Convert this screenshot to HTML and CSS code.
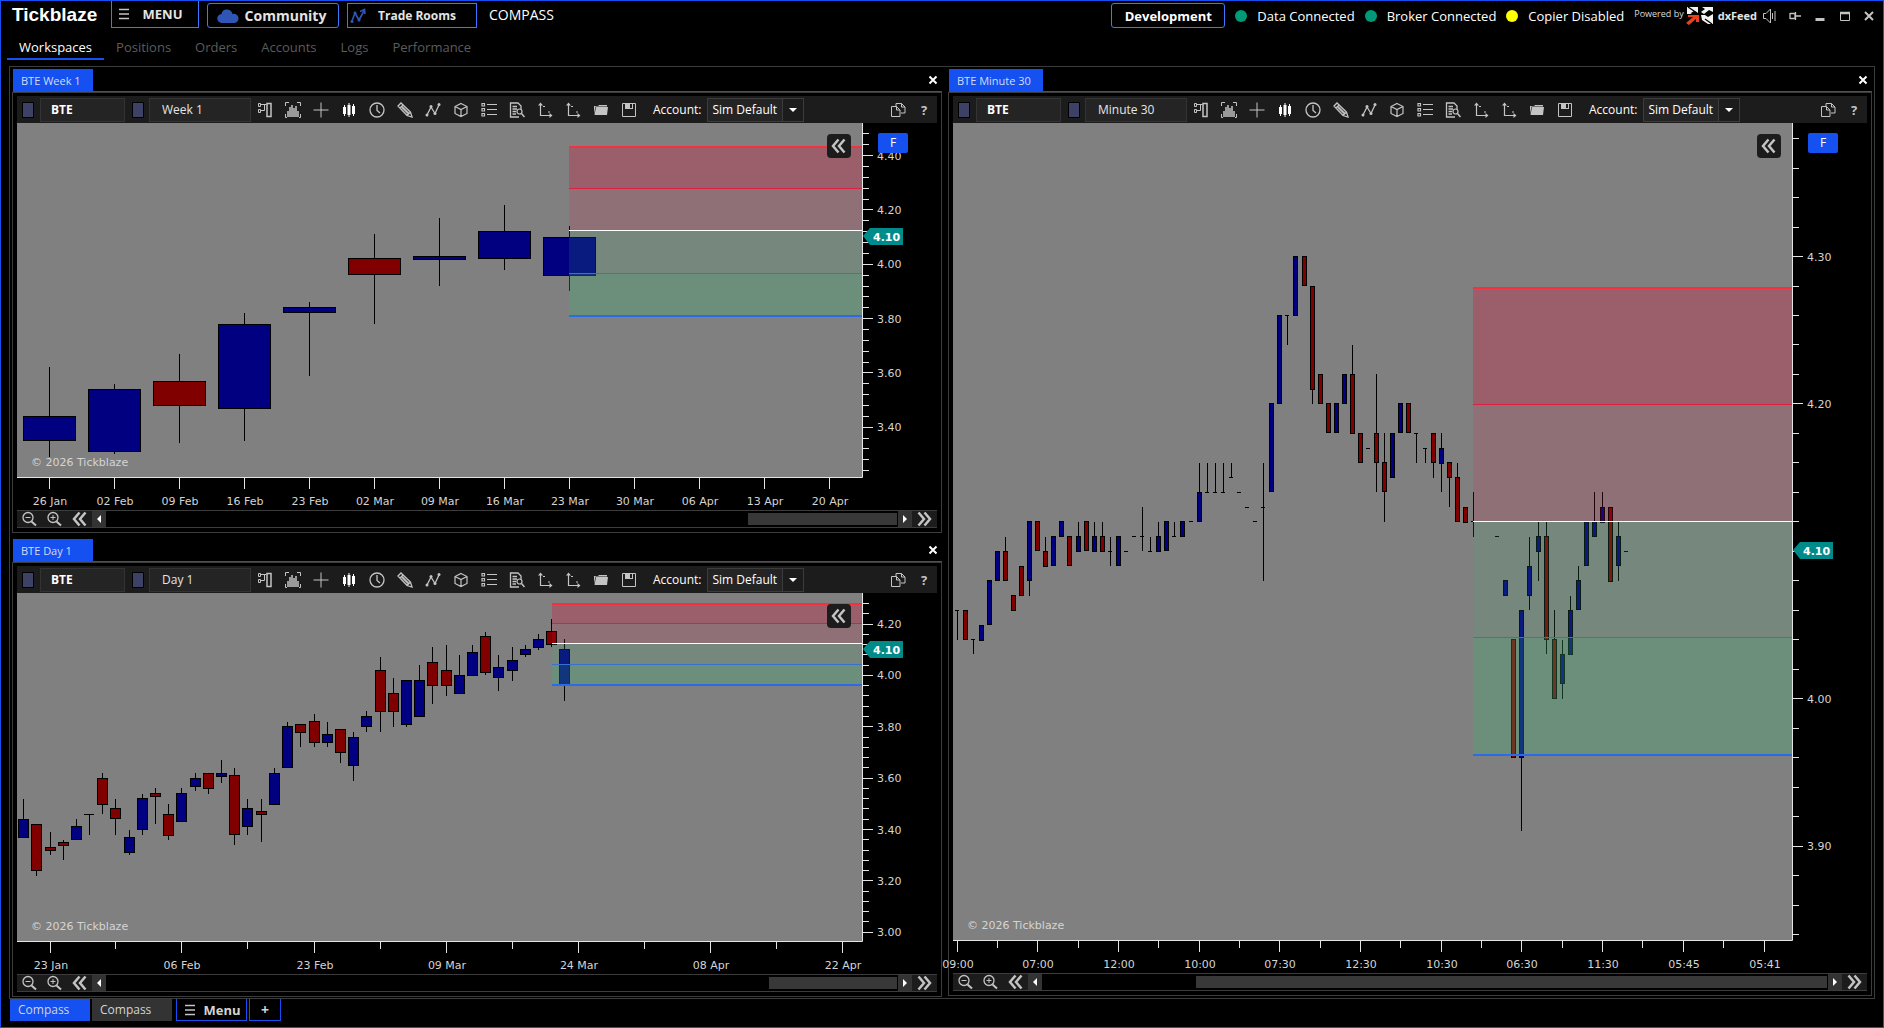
FILE: index.html
```html
<!DOCTYPE html>
<html lang="en">
<head>
<meta charset="utf-8">
<meta name="viewport" content="width=device-width, initial-scale=1">
<title>Tickblaze</title>
<link rel="stylesheet" href="styles.css">
</head>
<body>
<svg class="sprite" aria-hidden="true">
  <symbol id="i-dock" viewBox="0 0 16 16"><path d="M1.500 1.500h2v3h-2zM1.500 7.500h2v3h-2zM4 2.500h5.500M4 8.500h3.500M7.500 3v5.500" fill="none" stroke="currentColor"/><path d="M10 1.500h4v13h-4z" fill="none" stroke="currentColor" stroke-width="1.500"/></symbol>
  <symbol id="i-histogram" viewBox="0 0 16 16"><path d="M.5 4V.5H4M12 .5h3.500V4M.5 12v3.500H2M15.500 12v3.500H14" fill="none" stroke="currentColor"/><path d="M3 15V9M5 15V5M7 15V3M9 15V6M11 15V4M13 15V9" stroke="currentColor" stroke-width="1.500"/></symbol>
  <symbol id="i-cross" viewBox="0 0 16 16"><path d="M8 .5v15M.5 8h15" stroke="currentColor"/></symbol>
  <symbol id="i-candles" viewBox="0 0 16 16"><path d="M2 5h3v7H2zM6.500 3h3v10h-3zM11 4h3v8h-3z" fill="currentColor"/><path d="M3.500 3v11M8 1v14M12.500 2v12" stroke="currentColor"/></symbol>
  <symbol id="i-clock" viewBox="0 0 16 16"><circle cx="8" cy="8" r="7" fill="none" stroke="currentColor" stroke-width="1.300"/><path d="M8 3v5.500l3 2.500" fill="none" stroke="currentColor" stroke-width="1.300"/></symbol>
  <symbol id="i-pencil" viewBox="0 0 16 16"><path d="M1 4 4 1 13.500 10 15 15 10 13.500zM3 6 6 3M5 5l7 7M10 13.500 13.500 10" fill="none" stroke="currentColor" stroke-width="1.300"/><path d="M4 6 6 4 12.500 10.500 10.500 12.500z" fill="currentColor" opacity=".6"/></symbol>
  <symbol id="i-zigzag" viewBox="0 0 16 16"><path d="M2 13 6 5l4 6.500L14 3" fill="none" stroke="currentColor" stroke-width="1.300"/><circle cx="2" cy="13" r="1.500" fill="currentColor"/><circle cx="6" cy="4.500" r="1.500" fill="currentColor"/><circle cx="10" cy="11.500" r="1.500" fill="currentColor"/><circle cx="14" cy="2.500" r="1.500" fill="currentColor"/></symbol>
  <symbol id="i-cube" viewBox="0 0 16 16"><path d="M8 1.500 14 4.500v7L8 14.500 2 11.500v-7zM2 4.500l6 3 6-3M8 7.500v7" fill="none" stroke="currentColor" stroke-width="1.200"/></symbol>
  <symbol id="i-list" viewBox="0 0 16 16"><path d="M1 1.500h2.500V4H1zM1 6.500h2.500V9H1zM1 11.500h2.500V14H1zM6 2.500h10M6 7.500h10M6 12.500h10" fill="none" stroke="currentColor" stroke-width="1.200"/></symbol>
  <symbol id="i-report" viewBox="0 0 16 16"><path d="M12 7V4L9 1H1.500v14H10M3.500 4.500H8M3.500 7H8M3.500 9.500H7M3.500 12H7" fill="none" stroke="currentColor" stroke-width="1.300"/><circle cx="10.500" cy="9.500" r="2.500" fill="none" stroke="currentColor" stroke-width="1.200"/><path d="m12.500 11.500 3 3.500" stroke="currentColor" stroke-width="1.500"/></symbol>
  <symbol id="i-axis" viewBox="0 0 16 16"><path d="M3.500 2v11.500H14" fill="none" stroke="currentColor" stroke-width="1.200"/><path d="M1 3.500 3.500.5 6 3.500zM12.500 11l3 2.500-3 2.500z" fill="currentColor"/><path d="M6 4.500h2M12 9v2" stroke="currentColor"/></symbol>
  <symbol id="i-folder" viewBox="0 0 16 16"><path d="M1.500 13 3 5h12l-1 8zM1 12V4h4l1-1h8v1.500H2.500z" fill="currentColor"/></symbol>
  <symbol id="i-save" viewBox="0 0 16 16"><path d="M1.500 1.500h13v13h-13z" fill="none" stroke="currentColor"/><path d="M4 1h8v6H4z" fill="currentColor"/><path d="M9 2h2v4H9z" fill="#1c1c1c"/></symbol>
  <symbol id="i-copy" viewBox="0 0 16 16"><path d="M6 4.500V1.500h5.500L15 5v6h-4" fill="none" stroke="currentColor"/><path d="M1.500 4.500h5L10 8v6.500H1.500zM6.500 4.500V8H10M11.500 1.500V5H15" fill="none" stroke="currentColor"/></symbol>
  <symbol id="i-zoom-out" viewBox="0 0 16 16"><circle cx="6" cy="6.500" r="5" fill="none" stroke="currentColor" stroke-width="1.300"/><path d="M3.500 6.500h5" stroke="currentColor"/><path d="m9.500 10.500 4.500 4" stroke="currentColor" stroke-width="2"/></symbol>
  <symbol id="i-zoom-in" viewBox="0 0 16 16"><circle cx="6" cy="6.500" r="5" fill="none" stroke="currentColor" stroke-width="1.300"/><path d="M3.500 6.500h5M6 4v5" stroke="currentColor"/><path d="m9.500 10.500 4.500 4" stroke="currentColor" stroke-width="2"/></symbol>
  <symbol id="i-back" viewBox="0 0 16 16"><path d="M7.500 1.500 2 8l5.500 6.500M13.500 1.500 8 8l5.500 6.500" fill="none" stroke="currentColor" stroke-width="2.500"/></symbol>
  <symbol id="i-forward" viewBox="0 0 16 16"><path d="M1.500 1.500 7 8l-5.500 6.500M7.500 1.500 13 8l-5.500 6.500" fill="none" stroke="currentColor" stroke-width="2.500"/></symbol>
  <symbol id="i-left" viewBox="0 0 16 16"><path d="M10 4v8L6 8z" fill="currentColor"/></symbol>
  <symbol id="i-right" viewBox="0 0 16 16"><path d="M6 4v8l4-4z" fill="currentColor"/></symbol>
  <symbol id="i-burger" viewBox="0 0 16 16"><path d="M3 3.500h10M3 8h10M3 12.500h10" stroke="currentColor" stroke-width="1.600"/></symbol>
  <symbol id="i-close" viewBox="0 0 16 16"><path d="m4.500 4.500 7 7M11.500 4.500l-7 7" stroke="currentColor" stroke-width="2"/></symbol>
</svg>

<template id="tool-buttons">
  <button type="button" aria-label="Dock"><svg><use href="#i-dock"/></svg></button>
  <button type="button" aria-label="Bar type"><svg><use href="#i-histogram"/></svg></button>
  <button type="button" aria-label="Crosshair"><svg><use href="#i-cross"/></svg></button>
  <button type="button" aria-label="Chart style"><svg class="bright"><use href="#i-candles"/></svg></button>
  <button type="button" aria-label="Sessions"><svg><use href="#i-clock"/></svg></button>
  <button type="button" aria-label="Drawing tools"><svg><use href="#i-pencil"/></svg></button>
  <button type="button" aria-label="Indicators"><svg><use href="#i-zigzag"/></svg></button>
  <button type="button" aria-label="Objects"><svg><use href="#i-cube"/></svg></button>
  <button type="button" aria-label="Properties"><svg><use href="#i-list"/></svg></button>
  <button type="button" aria-label="Data window"><svg><use href="#i-report"/></svg></button>
  <button type="button" aria-label="Scale price axis"><svg><use href="#i-axis"/></svg></button>
  <button type="button" aria-label="Scale time axis"><svg><use href="#i-axis"/></svg></button>
  <button type="button" aria-label="Open template"><svg><use href="#i-folder"/></svg></button>
  <button type="button" aria-label="Save template"><svg><use href="#i-save"/></svg></button>
</template>

<header class="topbar">
  <span class="brand">Tickblaze</span>
  <button type="button" class="top-button menu-button"><svg><use href="#i-burger"/></svg>MENU</button>
  <button type="button" class="top-button community-button">
    <svg viewBox="0 0 22 14"><path d="M5 14a4.500 4.500 0 0 1-.5-9A5 5 0 0 1 10 .5 6 6 0 0 1 15.500 5 4.500 4.500 0 0 1 21.500 9.500 4.500 4.500 0 0 1 17 14z" fill="#2f55b5"/></svg>Community</button>
  <button type="button" class="top-button rooms-button">
    <svg viewBox="0 0 16 16"><path d="M2 13 5 5l4 7 5-9M10 3.500 14.500 1.500 15 6" fill="none" stroke="#2f55b5" stroke-width="1.600"/><circle cx="2" cy="13.500" r="1.500" fill="#2f55b5"/><circle cx="5" cy="5" r="1.500" fill="#2f55b5"/><circle cx="9" cy="12" r="1.500" fill="#2f55b5"/></svg>Trade Rooms</button>
  <span class="workspace-name">COMPASS</span>
  <div class="status">
    <button type="button" class="top-button dev-button">Development</button>
    <span class="state">Data Connected</span>
    <span class="state">Broker Connected</span>
    <span class="state state-off">Copier Disabled</span>
    <span class="powered">Powered by</span>
    <svg class="feed-logo" viewBox="0 0 28 18"><path d="M1 0h11v6L8 4 5 6H1zM16 0h11v5l-4-2-5 4-3-2 4-3zM15 8h4l3 2 5-3v10h-5l-6-4zM1 4l5 3H1z" fill="#f2f2f2"/><path d="M2 0l9 6M18 17l-3-3M19 12l7 5" stroke="#000" stroke-width="1.300" fill="none"/><path d="M2 8h11v7h-3v-3l-7 6-3-2 7-6H2z" fill="#e8401c"/></svg>
    <span class="feed-name">dxFeed</span>
    <button type="button" class="win" aria-label="Sound"><svg viewBox="0 0 16 16"><path d="M1.500 5.500H4L8.500 1v14L4 10.500H1.500zM10.500 5v6M13 3v10" fill="none" stroke="currentColor"/></svg></button>
    <button type="button" class="win" aria-label="Pin"><svg viewBox="0 0 16 16"><path d="M3 5v6M3 5.500h5v5H3M8.500 4v8M9 8h5" fill="none" stroke="currentColor" stroke-width="1.300"/></svg></button>
    <button type="button" class="win" aria-label="Minimize"><svg viewBox="0 0 16 16"><path d="M3.500 11.500h9" stroke="currentColor" stroke-width="3"/></svg></button>
    <button type="button" class="win" aria-label="Maximize"><svg viewBox="0 0 16 16"><path d="M3.500 4.500h9v8h-9z" fill="none" stroke="currentColor"/><path d="M3 5h10" stroke="currentColor" stroke-width="2.500"/></svg></button>
    <button type="button" class="win last" aria-label="Close"><svg viewBox="0 0 16 16"><path d="m4 4 8 8M12 4l-8 8" stroke="currentColor" stroke-width="2"/></svg></button>
  </div>
</header>

<nav class="sections">
  <a href="#workspaces" class="current">Workspaces</a>
  <a href="#positions">Positions</a>
  <a href="#orders">Orders</a>
  <a href="#accounts">Accounts</a>
  <a href="#logs">Logs</a>
  <a href="#performance">Performance</a>
</nav>

<main class="workspace">
  <div class="column column-split">
    <section class="panel">
      <div class="panel-head"><h2>BTE Week 1</h2><button type="button" aria-label="Close BTE Week 1"><svg><use href="#i-close"/></svg></button></div>
      <div class="panel-body">
        <div class="toolbar">
          <button type="button" class="swatch" aria-label="Symbol link"></button>
          <input class="symbol" aria-label="Symbol" value="BTE">
          <button type="button" class="swatch" aria-label="Interval link"></button>
          <input class="interval" aria-label="Interval" value="Week 1">
          <div class="tools"></div>
          <label class="account">Account:<span class="picker"><select><option>Sim Default</option></select></span></label>
          <div class="tools-end">
            <button type="button" aria-label="Duplicate"><svg><use href="#i-copy"/></svg></button>
            <button type="button" aria-label="Help">?</button>
          </div>
        </div>
        <div class="chart">
          <svg class="plot" data-chart="week" role="img" aria-label="BTE weekly candles"></svg>
          <button type="button" class="collapse" aria-label="Collapse"><svg><use href="#i-back"/></svg></button>
          <button type="button" class="fixed-scale">F</button>
        </div>
        <div class="scroller">
          <button type="button" aria-label="Zoom out"><svg><use href="#i-zoom-out"/></svg></button>
          <button type="button" aria-label="Zoom in"><svg><use href="#i-zoom-in"/></svg></button>
          <button type="button" aria-label="First bar"><svg><use href="#i-back"/></svg></button>
          <button type="button" class="step" aria-label="Scroll left"><svg><use href="#i-left"/></svg></button>
          <div class="track"><div class="thumb" style="width:18.900%"></div></div>
          <button type="button" class="step" aria-label="Scroll right"><svg><use href="#i-right"/></svg></button>
          <button type="button" aria-label="Last bar"><svg><use href="#i-forward"/></svg></button>
        </div>
      </div>
    </section>

    <section class="panel">
      <div class="panel-head"><h2>BTE Day 1</h2><button type="button" aria-label="Close BTE Day 1"><svg><use href="#i-close"/></svg></button></div>
      <div class="panel-body">
        <div class="toolbar">
          <button type="button" class="swatch" aria-label="Symbol link"></button>
          <input class="symbol" aria-label="Symbol" value="BTE">
          <button type="button" class="swatch" aria-label="Interval link"></button>
          <input class="interval" aria-label="Interval" value="Day 1">
          <div class="tools"></div>
          <label class="account">Account:<span class="picker"><select><option>Sim Default</option></select></span></label>
          <div class="tools-end">
            <button type="button" aria-label="Duplicate"><svg><use href="#i-copy"/></svg></button>
            <button type="button" aria-label="Help">?</button>
          </div>
        </div>
        <div class="chart">
          <svg class="plot" data-chart="day" role="img" aria-label="BTE daily candles"></svg>
          <button type="button" class="collapse" aria-label="Collapse"><svg><use href="#i-back"/></svg></button>
        </div>
        <div class="scroller">
          <button type="button" aria-label="Zoom out"><svg><use href="#i-zoom-out"/></svg></button>
          <button type="button" aria-label="Zoom in"><svg><use href="#i-zoom-in"/></svg></button>
          <button type="button" aria-label="First bar"><svg><use href="#i-back"/></svg></button>
          <button type="button" class="step" aria-label="Scroll left"><svg><use href="#i-left"/></svg></button>
          <div class="track"><div class="thumb" style="width:16.200%"></div></div>
          <button type="button" class="step" aria-label="Scroll right"><svg><use href="#i-right"/></svg></button>
          <button type="button" aria-label="Last bar"><svg><use href="#i-forward"/></svg></button>
        </div>
      </div>
    </section>
  </div>

  <div class="column column-tall">
    <section class="panel">
      <div class="panel-head"><h2>BTE Minute 30</h2><button type="button" aria-label="Close BTE Minute 30"><svg><use href="#i-close"/></svg></button></div>
      <div class="panel-body">
        <div class="toolbar">
          <button type="button" class="swatch" aria-label="Symbol link"></button>
          <input class="symbol" aria-label="Symbol" value="BTE">
          <button type="button" class="swatch" aria-label="Interval link"></button>
          <input class="interval" aria-label="Interval" value="Minute 30">
          <div class="tools"></div>
          <label class="account">Account:<span class="picker"><select><option>Sim Default</option></select></span></label>
          <div class="tools-end">
            <button type="button" aria-label="Duplicate"><svg><use href="#i-copy"/></svg></button>
            <button type="button" aria-label="Help">?</button>
          </div>
        </div>
        <div class="chart">
          <svg class="plot" data-chart="minute" role="img" aria-label="BTE 30 minute candles"></svg>
          <button type="button" class="collapse" aria-label="Collapse"><svg><use href="#i-back"/></svg></button>
          <button type="button" class="fixed-scale">F</button>
        </div>
        <div class="scroller">
          <button type="button" aria-label="Zoom out"><svg><use href="#i-zoom-out"/></svg></button>
          <button type="button" aria-label="Zoom in"><svg><use href="#i-zoom-in"/></svg></button>
          <button type="button" aria-label="First bar"><svg><use href="#i-back"/></svg></button>
          <button type="button" class="step" aria-label="Scroll left"><svg><use href="#i-left"/></svg></button>
          <div class="track"><div class="thumb" style="width:80.500%"></div></div>
          <button type="button" class="step" aria-label="Scroll right"><svg><use href="#i-right"/></svg></button>
          <button type="button" aria-label="Last bar"><svg><use href="#i-forward"/></svg></button>
        </div>
      </div>
    </section>
  </div>
</main>

<footer class="workspace-tabs">
  <button type="button" class="ws-tab active">Compass</button>
  <button type="button" class="ws-tab">Compass</button>
  <button type="button" class="ws-menu"><svg><use href="#i-burger"/></svg>Menu</button>
  <button type="button" class="ws-add" aria-label="Add workspace">+</button>
</footer>
<script src="charts.js"></script>
</body>
</html>
```

FILE: styles.css
```css
* { box-sizing: border-box; }

body {
  margin: 0;
  min-height: 100vh;
  display: flex;
  flex-direction: column;
  padding: 0 8px 6px;
  border: 1px solid #1550f0;
  background: #000;
  color: #fff;
  font: 13px/18px "Open Sans", "Noto Sans", sans-serif;
}

button, input, select {
  margin: 0;
  padding: 0;
  border: 0;
  border-radius: 0;
  background: none;
  color: inherit;
  font: inherit;
}

button {
  display: flex;
  align-items: center;
  justify-content: center;
  flex: none;
}

svg { display: block; width: 16px; height: 16px; flex: none; }
.sprite { position: absolute; width: 0; height: 0; }

/* title bar */
.topbar { display: flex; align-items: flex-start; height: 31px; white-space: nowrap; }
.brand {
  width: 102px;
  padding-left: 3px;
  font: bold 19px/28px "Liberation Sans", sans-serif;
}
.top-button { height: 25px; margin-top: 2px; border: 1px solid #3b78ff; font-weight: 700; color: #e4e4e4; }
.menu-button { width: 88px; height: 27px; margin: 0 8px 0 0; gap: 11px; border-top: 0; padding-right: 12px; }
.menu-button svg, .ws-menu svg { color: #c4c4c4; }
.community-button { width: 132px; margin-right: 8px; gap: 6px; padding-right: 3px; border-radius: 3px; font-size: 14px; }
.community-button svg { width: 22px; height: 14px; }
.rooms-button { width: 130px; margin-right: 12px; gap: 12px; padding-right: 18px; font-size: 12px; }
.workspace-name { line-height: 28px; font-size: 14px; }
.status { display: flex; align-items: center; height: 29px; margin-left: auto; }
.dev-button { width: 114px; height: 25px; margin: 0 10px 0 0; border-radius: 3px; color: #fff; }
.state { display: flex; align-items: center; gap: 10px; margin-right: 10px; }
.state::before { content: ""; width: 12px; height: 12px; border-radius: 6px; background: #009a78; }
.state-off::before { background: #ff0; }
.powered { padding-bottom: 4px; font-size: 9px; line-height: 14px; color: #ddd; }
.feed-logo { width: 28px; height: 18px; margin: 0 4px 0 2px; }
.feed-name { font-weight: 700; font-size: 11px; color: #e4e4e4; }
.win { width: 25px; color: #c4c4c4; }
.win.last { width: 12px; margin-left: 6px; }

/* section navigation */
.sections { display: flex; height: 34px; margin-left: -2px; }
.sections a {
  height: 28px;
  padding: 6px 12px 0;
  color: #5c5c5c;
  text-decoration: none;
}
.sections .current { color: #fff; border-bottom: 2px solid #1550f0; }

/* workspace frame */
.workspace {
  flex: 1;
  display: grid;
  grid-template-columns: 930fr 924fr;
  gap: 6px;
  padding: 2px 2px 1px;
  border: 1px solid #3c3c3c;
}
.column { display: grid; gap: 6px; min-width: 0; }
.column-split { grid-template-rows: 464fr 458fr; }
.column-tall { padding-bottom: 1px; }

.panel { display: flex; flex-direction: column; min-width: 0; min-height: 300px; }
.panel-head {
  display: flex;
  justify-content: space-between;
  height: 23px;
  margin-left: 1px;
  padding-right: 1px;
  border-bottom: 1px solid #1550f0;
}
.panel-head h2 {
  min-width: 80px;
  margin: 0;
  padding: 0 12px 0 8px;
  background: #1550f0;
  color: #d4dcf4;
  font-size: 11px;
  font-weight: 400;
  line-height: 23px;
}
.panel-head button { color: #fff; }
.panel-body {
  flex: 1;
  display: flex;
  flex-direction: column;
  padding: 3px 4px 4px;
  border: 1px solid #3c3c3c;
}

/* chart toolbar */
.toolbar { display: flex; align-items: center; height: 27px; padding-left: 5px; background: #1c1c1c; }
.swatch { width: 12px; height: 16px; border: 1px solid #000; background: #3d4166; }
.symbol, .interval { height: 24px; border: 1px solid #333; background: #242424; font-size: 12px; }
.symbol { width: 85px; margin: 0 7px 0 6px; padding-left: 10px; font-weight: 700; }
.interval { width: 102px; margin-left: 5px; padding-left: 12px; color: #e4e4e4; }
.tools { display: flex; }
.tools button { width: 28px; height: 24px; color: #c4c4c4; }
.tools .bright { color: #fff; }
.account { display: flex; align-items: center; gap: 6px; margin-left: 10px; white-space: nowrap; font-size: 12px; }
.picker { position: relative; width: 97px; height: 24px; border: 1px solid #3c3c3c; background: #242424; }
.picker select { width: 100%; height: 22px; padding-left: 4px; appearance: none; }
.picker::before {
  content: "";
  position: absolute;
  inset: 0 0 0 auto;
  width: 20px;
  border-left: 1px solid #3c3c3c;
  background: #1c1c1c;
  pointer-events: none;
}
.picker::after {
  content: "";
  position: absolute;
  right: 6px;
  top: 9px;
  border: 4px solid transparent;
  border-top-color: #fff;
  border-bottom: 0;
  pointer-events: none;
}
.tools-end { display: flex; margin-left: auto; color: #c4c4c4; font-weight: 700; }
.tools-end button { width: 26px; }

/* chart */
.chart { position: relative; flex: 1; min-height: 200px; }
.plot { position: absolute; width: 100%; height: 100%; overflow: visible; font: 11px "DejaVu Sans", sans-serif; }
.collapse {
  position: absolute;
  top: 11px;
  right: 86px;
  width: 24px;
  height: 24px;
  border-radius: 4px;
  background: #1c1c1c;
  color: #c4c4c4;
}
.fixed-scale {
  position: absolute;
  top: 10px;
  right: 29px;
  width: 30px;
  height: 20px;
  border-radius: 2px;
  background: #1550f0;
  font-size: 12px;
}

.plot-bg { fill: #808080; }
.axis { stroke: #e4e4e4; fill: none; }
.axis-label { fill: #d4d4d4; }
.watermark { fill: #d4d4d4; }
.wick { stroke: #000; }
.up { fill: #000080; stroke: #000; }
.down { fill: #800000; stroke: #000; }
.stop-far { fill: rgba(220, 20, 60, .3); }
.stop-near { fill: rgba(220, 20, 60, .15); }
.target-near { fill: rgba(60, 179, 113, .15); }
.target-far { fill: rgba(60, 179, 113, .3); }
.line-stop { stroke: #f5303f; stroke-width: 2; }
.line-stop-mid { stroke: #dc2040; }
.line-entry { stroke: #fff; }
.line-target-mid { stroke: #3a70d0; }
.line-target { stroke: #2b6ae8; stroke-width: 2; }
.price-tag { fill: #008b8b; }
.price-text { fill: #fff; font-weight: 700; }

/* scroll strip */
.scroller { display: flex; height: 18px; border: solid #3c3c3c; border-width: 1px 0; }
.scroller button { width: 25px; background: #1c1c1c; color: #c4c4c4; }
.scroller .step { width: 14px; background: #333; color: #fff; }
.track { flex: 1; display: flex; justify-content: flex-end; padding: 2px 1px; }
.thumb { background: #383838; }

/* workspace tabs */
.workspace-tabs { display: flex; height: 22px; padding-left: 1px; }
.ws-tab { justify-content: flex-start; width: 80px; margin-right: 2px; padding-left: 8px; background: #333; color: #d4d4d4; font-size: 12px; }
.ws-tab.active { background: #1550f0; }
.ws-menu, .ws-add { border: 1px solid #1550f0; border-top: 0; font-weight: 700; color: #d4d4d4; }
.ws-menu { width: 71px; margin: 0 2px; gap: 5px; }
.ws-add { width: 32px; font-size: 14px; }
```

FILE: charts.js
```js
// Candle: [bar, high, body top, body bottom, low, direction]; prices in cents.
// Direction is "u" up, "d" down, "-" unchanged.
const CHARTS = {
  week: {
    top: 452.04, bottom: 321.66, major: 20, minor: 4, first: 340, last: 440,
    x0: 32, step: 65, body: 52, price: 410, zoneX: 552,
    zone: [443.2, 428, 412.5, 396.7, 381],
    ticks: { start: 0, every: 1, minor: 0 },
    labels: ["26 Jan", "02 Feb", "09 Feb", "16 Feb", "23 Feb", "02 Mar", "09 Mar", "16 Mar", "23 Mar", "30 Mar", "06 Apr", "13 Apr", "20 Apr"],
    candles: [
      [0,362,344,335,329,"u"],[1,356,354,331,330,"u"],[2,367,357,348,334,"d"],[3,382,378,347,335,"u"],
      [4,386,384,382,359,"u"],[5,411,402,396,378,"d"],[6,417,403,402,392,"u"],[7,422,412,402,398,"u"],
      [8,414,410,396,390,"u"]
    ]
  },
  day: {
    top: 432.1, bottom: 296.6, major: 20, minor: 4, first: 300, last: 420,
    x0: 6.6, step: 13.2, body: 10, price: 410, zoneX: 535,
    zone: [427.9, 420.4, 412.6, 404.4, 396.3],
    ticks: { start: 2, every: 10, minor: 5 },
    labels: ["23 Jan", "06 Feb", "23 Feb", "09 Mar", "24 Mar", "08 Apr", "22 Apr"],
    candles: [
      [0,352,344,337,337,"u"],[1,342,342,324,322,"d"],[2,339,333,332,330,"d"],[3,336,335,334,328,"d"],
      [4,344,341,336,336,"u"],[5,346,346,346,338,"-"],[6,362,360,350,346,"d"],[7,352,348,344,338,"d"],
      [8,340,337,331,330,"u"],[9,354,352,340,338,"u"],[10,356,354,353,342,"d"],[11,350,346,338,336,"d"],
      [12,356,354,343,343,"u"],[13,362,360,357,355,"u"],[14,362,362,356,354,"d"],[15,367,362,361,358,"u"],
      [16,364,361,338,334,"d"],[17,352,348,341,338,"u"],[18,352,347,346,335,"d"],[19,364,362,350,350,"u"],
      [20,382,380,364,364,"u"],[21,381,381,378,372,"d"],[22,385,382,374,372,"d"],[23,382,377,374,372,"u"],
      [24,379,379,370,366,"d"],[25,378,376,365,359,"u"],[26,386,384,380,378,"u"],[27,407,402,386,378,"d"],
      [28,399,393,386,380,"d"],[29,398,398,381,380,"u"],[30,404,398,384,384,"u"],[31,411,405,396,389,"d"],
      [32,412,402,396,392,"d"],[33,408,400,393,393,"u"],[34,412,409,400,400,"u"],[35,417,415,401,400,"d"],
      [36,408,403,399,394,"u"],[37,411,406,402,398,"u"],[38,412,410,408,407,"u"],[39,416,414,411,410,"u"],
      [40,422,417,412,411,"d"],[41,414,410,396.5,390,"u"]
    ]
  },
  minute: {
    top: 439.06, bottom: 383.63, major: 10, minor: 2, first: 390, last: 430,
    x0: 4, step: 8.07, body: 4, price: 410, zoneX: 520,
    zone: [427.85, 420, 412.05, 404.2, 396.2],
    ticks: { start: 0, every: 10, minor: 5 },
    labels: ["09:00", "07:00", "12:00", "10:00", "07:30", "12:30", "10:30", "06:30", "11:30", "05:45", "05:41"],
    candles: [
      [0,406,406,406,404,"-"],[1,406,406,404,404,"d"],[2,404,404,404,403,"-"],[3,405,405,404,404,"u"],
      [4,408,408,405,405,"u"],[5,410,410,408,408,"u"],[6,411,410,408,408,"d"],[7,407,407,406,406,"d"],
      [8,409,409,407,407,"d"],[9,412,412,408,407,"u"],[10,412,412,410,410,"d"],[11,411,410,409,409,"d"],
      [12,411,411,409,409,"u"],[13,412,412,411,411,"u"],[14,411,411,409,409,"d"],[15,412,411,410,410,"u"],
      [16,412,412,410,410,"d"],[17,412,411,410,410,"u"],[18,412,411,410,410,"d"],[19,411,410,410,409,"-"],
      [20,411,411,409,409,"u"],[21,410,410,410,410,"-"],[22,411,411,411,411,"-"],[23,413,411,411,410,"-"],
      [24,411,410,410,410,"-"],[25,412,411,410,410,"u"],[26,412,412,410,410,"u"],[27,412,411,411,411,"-"],
      [28,412,412,411,411,"u"],[29,412,412,412,412,"-"],[30,416,414,412,412,"u"],[31,416,414,414,414,"-"],
      [32,416,414,414,414,"-"],[33,416,414,414,414,"-"],[34,416,415,415,415,"-"],[35,414,414,414,414,"-"],
      [36,413,413,413,413,"-"],[37,412,412,412,412,"-"],[38,416,413,413,408,"-"],[39,420,420,414,414,"u"],
      [40,426,426,420,420,"u"],[41,426,426,426,424,"-"],[42,430,430,426,426,"u"],[43,430,430,428,428,"d"],
      [44,428,428,421,420,"d"],[45,422,422,420,420,"d"],[46,420,420,418,418,"d"],[47,420,420,418,418,"u"],
      [48,422,422,420,420,"u"],[49,424,422,418,418,"d"],[50,418,418,416,416,"d"],[51,417,417,417,417,"-"],
      [52,422,418,416,414,"d"],[53,418,416,414,412,"d"],[54,418,418,415,415,"u"],[55,420,420,418,418,"u"],
      [56,420,420,418,418,"d"],[57,418,418,418,416,"-"],[58,417,417,417,416,"-"],[59,418,418,416,415,"d"],
      [60,418,417,416,414,"u"],[61,416,416,415,413,"d"],[62,416,415,412,412,"d"],[63,413,413,412,412,"d"],
      [64,414,412,412,411,"-"],[67,411,411,411,411,"-"],[68,408,408,407,407,"u"],[69,404,404,396,396,"d"],
      [70,406,406,396,391,"u"],[71,411,409,407,406,"u"],[72,412,411,410,408,"u"],[73,412,411,404,403,"d"],
      [74,406,404,400,400,"d"],[75,404,403,401,400,"u"],[76,407,406,403,403,"u"],[77,409,408,406,406,"u"],
      [78,412,412,409,409,"u"],[79,414,412,411,411,"u"],[80,414,413,412,412,"u"],[81,413,413,408,408,"d"],
      [82,412,411,409,408,"u"],[83,410,410,410,410,"-"]
    ]
  }
};

const AXIS_WIDTH = 75;
const AXIS_HEIGHT = 33;
const crisp = v => Math.floor(v) + 0.5;

function line(cls, x1, y1, x2, y2) {
  return `<line class="${cls}" x1="${x1}" y1="${y1}" x2="${x2}" y2="${y2}"/>`;
}

function rect(cls, x, y, w, h) {
  return `<rect class="${cls}" x="${x}" y="${y}" width="${w}" height="${h}"/>`;
}

function draw(svg) {
  const c = CHARTS[svg.dataset.chart];
  const width = svg.clientWidth - AXIS_WIDTH;
  const height = svg.clientHeight - AXIS_HEIGHT;
  const y = p => (c.top - p) * height / (c.top - c.bottom);
  const barX = i => crisp(c.x0 + i * c.step);
  let out = rect("plot-bg", 0, 0, width, height);

  for (const [i, high, top, bottom, low, dir] of c.candles) {
    const x = barX(i);
    const half = c.body / 2;
    if (high !== low) out += line("wick", x, Math.round(y(high)), x, Math.round(y(low)));
    if (dir === "-") out += line("wick", x - half - 0.5, crisp(y(top)), x + half - 0.5, crisp(y(top)));
    else out += rect(dir === "u" ? "up" : "down", x - half, crisp(y(top)), c.body, Math.max(2, Math.round(y(bottom) - y(top))));
  }

  // Risk and reward zones drawn over the candles
  const levels = c.zone.map(p => Math.round(y(p)));
  ["stop-far", "stop-near", "target-near", "target-far"].forEach((cls, i) => {
    out += rect(cls, c.zoneX, levels[i], width - c.zoneX, levels[i + 1] - levels[i]);
  });
  ["line-stop", "line-stop-mid", "line-entry", "line-target-mid", "line-target"].forEach((cls, i) => {
    const ly = i % 4 ? levels[i] + 0.5 : levels[i];
    out += line(cls, c.zoneX, ly, width, ly);
  });

  out += `<text class="watermark" x="14" y="${height - 11}">© 2026 Tickblaze</text>`;
  out += `<path class="axis" d="M0 ${height + 0.5}H${width + 0.5}V0"/>`;

  const lowest = Math.ceil(c.bottom / c.minor) * c.minor;
  for (let p = lowest; p < c.top - 1; p += c.minor) {
    const labelled = p % c.major === 0;
    out += line("axis", width, crisp(y(p)), width + (labelled ? 11 : 7), crisp(y(p)));
    if (labelled && p >= c.first && p <= c.last && !(c.major === 10 && p === c.price)) {
      out += `<text class="axis-label" x="${width + 15}" y="${Math.round(y(p)) + 4}">${(p / 100).toFixed(2)}</text>`;
    }
  }

  c.labels.forEach((text, n) => {
    const i = c.ticks.start + n * c.ticks.every;
    const x = barX(i);
    out += line("axis", x, height, x, height + 12);
    out += `<text class="axis-label" text-anchor="middle" x="${Math.round(x)}" y="${height + 28}">${text}</text>`;
    const mx = barX(i + c.ticks.minor);
    if (c.ticks.minor && mx < width) out += line("axis", mx, height, mx, height + 8);
  });

  const py = Math.round(y(c.price)) - 1;
  out += `<path class="price-tag" d="M${width + 1} ${py}l7-8h33v17h-33z"/>`;
  out += `<text class="price-text" x="${width + 11}" y="${py + 5}">${(c.price / 100).toFixed(2)}</text>`;
  svg.innerHTML = out;
}

const tools = document.getElementById("tool-buttons");
document.querySelectorAll(".tools").forEach(el => el.append(tools.content.cloneNode(true)));

const drawAll = () => document.querySelectorAll(".plot").forEach(draw);
drawAll();
window.addEventListener("resize", drawAll);
```
